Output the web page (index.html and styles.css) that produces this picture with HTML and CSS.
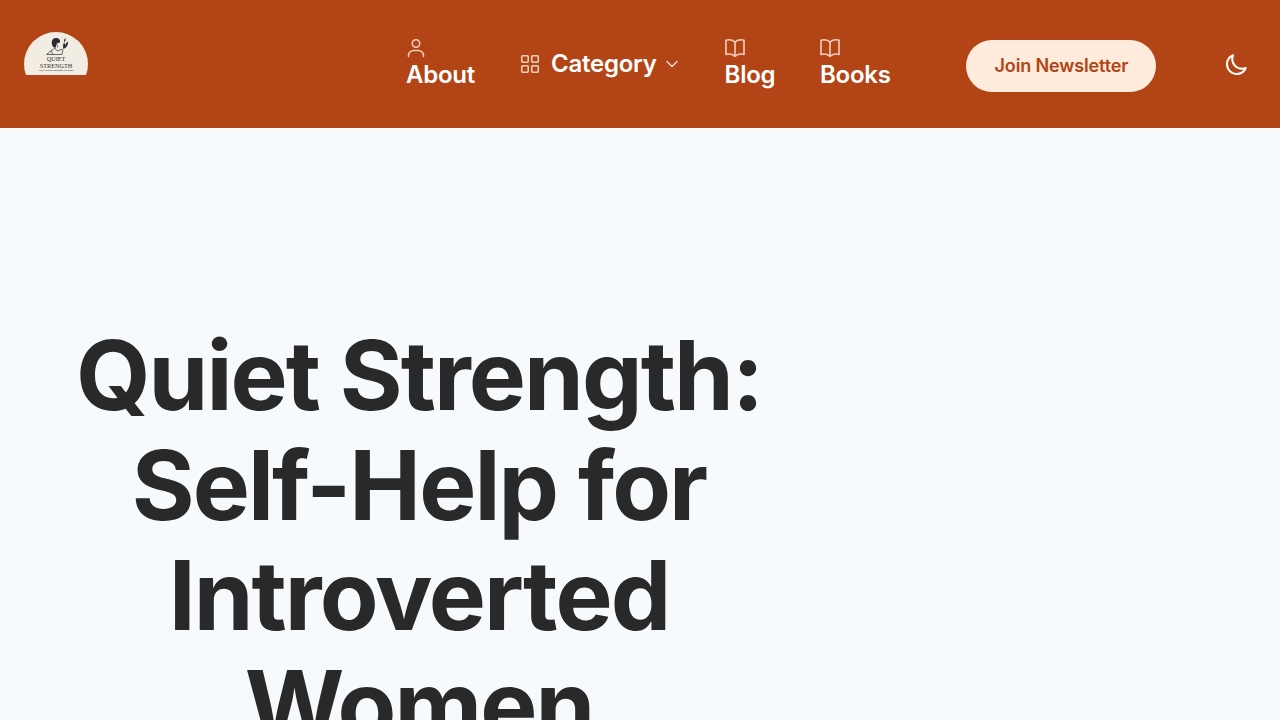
FILE: index.html
```html
<!DOCTYPE html>
<html lang="en">
<head>
<meta charset="utf-8">
<title>Quiet Strength</title>
<link rel="stylesheet" href="styles.css">
</head>
<body>
<header class="header">
  <a class="logo" href="#">
    <span class="logo-disc">
      <svg class="logo-art" width="26" height="19" viewBox="0 0 26 19" fill="none">
        <path d="M8 7.500C7 3.500 9 1 12 1c2.800 0 4.500 1.800 4 4-.5 1.300-2.300 1-3.500 1.800-.5 1.500-.3 3-1 4C9.500 11 8.500 9.500 8 7.500z" fill="#2e2a33"/>
        <path d="M12.500 7c.8 1.200 1.200 2.500 1 3.500M11 11c.5 1.500 1.500 2.500 3 3l4-2M10.500 11.500 6 14.500 2.500 17.500M7 14l2 3.500M2.500 17.500h15.500l1-5.500" stroke="#2e2a33" stroke-width=".7"/>
        <path d="M19.500 12c-.8-2.500-.5-4.500.5-6.500.8.800 1.200 1.800 1.200 3 .5-1.800 1.300-3 2.800-4 .5 3.300-1.300 6-4.500 7.500z" fill="#2e2a33"/>
        <path d="M20 5c-.2-1.500.3-2.800 1.300-4 .5 1.300.3 2.700-.7 4z" fill="#2e2a33"/>
      </svg>
      <span class="logo-name">QUIET<br>STRENGTH</span>
      <span class="logo-sub">FOR INTROVERTED WOMEN</span>
    </span>
  </a>
  <nav class="nav">
    <a class="nav-item stacked" href="#">
      <svg class="icon" width="24" height="24" viewBox="0 0 24 24" fill="none" stroke="currentColor" stroke-width="1.600" stroke-linecap="round" stroke-linejoin="round"><circle cx="12" cy="7.500" r="3.750"/><path d="M4.500 20.500v-1a5 5 0 0 1 5-5h5a5 5 0 0 1 5 5v1"/></svg>
      <span>About</span>
    </a>
    <a class="nav-item inline" href="#">
      <svg class="icon" width="24" height="24" viewBox="0 0 24 24" fill="none" stroke="currentColor" stroke-width="1.600" stroke-linejoin="round"><rect x="3.750" y="3.750" width="6.500" height="6.500" rx="1"/><rect x="13.750" y="3.750" width="6.500" height="6.500" rx="1"/><rect x="3.750" y="13.750" width="6.500" height="6.500" rx="1"/><rect x="13.750" y="13.750" width="6.500" height="6.500" rx="1"/></svg>
      <span>Category</span>
      <svg class="chevron" width="16" height="16" viewBox="0 0 24 24" fill="none" stroke="currentColor" stroke-width="1.800" stroke-linecap="round" stroke-linejoin="round"><path d="m19.500 8.250-7.500 7.500-7.500-7.500"/></svg>
    </a>
    <a class="nav-item stacked" href="#">
      <svg class="icon" width="24" height="24" viewBox="0 0 24 24" fill="none" stroke="currentColor" stroke-width="1.600" stroke-linecap="round" stroke-linejoin="round"><path d="M12 6.040A8.970 8.970 0 0 0 6 3.750c-1.050 0-2.060.18-3 .51v14.250A9 9 0 0 1 6 18c2.300 0 4.410.87 6 2.290M12 6.040a8.970 8.970 0 0 1 6-2.290c1.050 0 2.060.18 3 .51v14.250A9 9 0 0 0 18 18a8.970 8.970 0 0 0-6 2.290M12 6.040v14.250"/></svg>
      <span>Blog</span>
    </a>
    <a class="nav-item stacked" href="#">
      <svg class="icon" width="24" height="24" viewBox="0 0 24 24" fill="none" stroke="currentColor" stroke-width="1.600" stroke-linecap="round" stroke-linejoin="round"><path d="M12 6.040A8.970 8.970 0 0 0 6 3.750c-1.050 0-2.060.18-3 .51v14.250A9 9 0 0 1 6 18c2.300 0 4.410.87 6 2.290M12 6.040a8.970 8.970 0 0 1 6-2.290c1.050 0 2.060.18 3 .51v14.250A9 9 0 0 0 18 18a8.970 8.970 0 0 0-6 2.290M12 6.040v14.250"/></svg>
      <span>Books</span>
    </a>
  </nav>
  <a class="cta" href="#">Join Newsletter</a>
  <button class="theme" type="button" aria-label="Toggle theme">
    <svg width="24" height="24" viewBox="0 0 24 24" fill="none" stroke="currentColor" stroke-width="2" stroke-linecap="round" stroke-linejoin="round"><path d="M21.750 15A9.720 9.720 0 0 1 18 15.750 9.750 9.750 0 0 1 8.250 6c0-1.330.27-2.600.75-3.750A9.750 9.750 0 0 0 3 11.250 9.750 9.750 0 0 0 12.750 21a9.750 9.750 0 0 0 9-6Z"/></svg>
  </button>
</header>
<main class="hero">
  <div class="hero-col">
    <h1 class="title">Quiet Strength: Self-Help for Introverted Women</h1>
  </div>
</main>
</body>
</html>
```
FILE: styles.css
```css
* { box-sizing: border-box; }
html, body { height: 100%; }
body {
  margin: 0;
  height: 720px;
  overflow: hidden;
  background: #f6fafd;
  color: #292929;
  font-family: Inter, "Liberation Sans", sans-serif;
}
a { color: inherit; text-decoration: none; }
.header {
  height: 128px;
  background: #b34415;
  display: flex;
  align-items: center;
  color: #fff;
  padding: 0 32.500px 0 24px;
}
.logo {
  align-self: flex-start;
  margin-top: 32px;
  width: 64px;
  height: 43px;
  overflow: hidden;
  flex: none;
  display: block;
}
.logo-disc {
  width: 64px;
  height: 64px;
  border-radius: 50%;
  background: #f1ede2;
  color: #2e2a33;
  display: flex;
  flex-direction: column;
  align-items: center;
}
.logo-art { margin-top: 5px; margin-left: 2px; flex: none; }
.logo-name {
  font-family: "Liberation Serif", serif;
  font-size: 6.200px;
  line-height: 7px;
  text-align: center;
  margin-top: -1px;
}
.logo-sub {
  font-family: "Liberation Sans", sans-serif;
  font-size: 2.500px;
  line-height: 4px;
  white-space: nowrap;
}
.nav {
  display: flex;
  align-items: center;
  margin-left: 318px;
  gap: 44.600px;
}
.nav-item {
  font-size: 24px;
  font-weight: 600;
  line-height: 32px;
  letter-spacing: -0.01em;
}
.icon { color: #f2cfbd; flex: none; display: block; }
.chevron { color: #fbe6da; flex: none; margin-left: -2px; }
.stacked { display: flex; flex-direction: column; align-items: flex-start; padding-bottom: 2px; }
.stacked .icon { margin: 0 0 -1px -2px; }
.inline { display: flex; align-items: center; gap: 9px; margin: 0 0.300px 0 -1.600px; }
.cta {
  margin-left: 75.800px;
  margin-top: 4px;
  width: 190px;
  height: 52px;
  padding-bottom: 1px;
  border-radius: 26px;
  background: #ffebdb;
  color: #b34415;
  font-size: 18px;
  font-weight: 600;
  letter-spacing: -0.14px;
  display: flex;
  align-items: center;
  justify-content: center;
  flex: none;
}
.theme {
  margin-left: auto;
  margin-top: 2px;
  padding: 0;
  border: 0;
  background: none;
  color: #fff;
  width: 24px;
  height: 24px;
}
.theme svg { display: block; }
.hero { padding: 192px 0 0 48px; }
.hero-col { width: 742px; }
.title {
  margin: 0;
  font-size: 96px;
  line-height: 110px;
  font-weight: 700;
  text-align: center;
  letter-spacing: -0.02em;
}
```
